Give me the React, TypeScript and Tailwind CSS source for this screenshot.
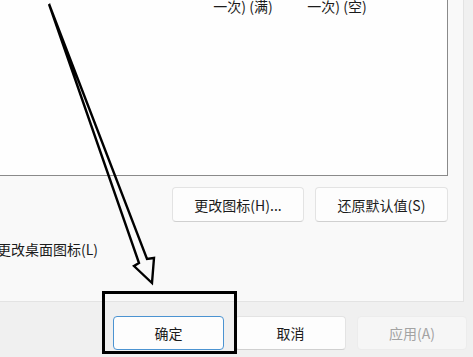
import React from "react";

const font = {
  fontFamily: '"Noto Sans CJK SC", "Noto Sans", sans-serif',
};

function DialogButton({
  label,
  width,
  primary,
  disabled,
}: {
  label: string;
  width: string;
  primary?: boolean;
  disabled?: boolean;
}) {
  let tone = "border-[#e3e3e3] border-b-[#d0d0d0] bg-[#fdfdfd] text-[#1b1b1b]";
  if (primary) tone = "border-[#4b93d1] bg-[#fdfdfd] text-[#1b1b1b]";
  if (disabled) tone = "border-[#ececec] bg-[#f6f6f6] text-[#a3a3a3]";
  return (
    <button
      className={`${width} h-[34px] shrink-0 rounded-[4px] border text-[14px] leading-[20px] ${tone}`}
    >
      {label}
    </button>
  );
}

function Annotation() {
  return (
    <svg
      className="absolute left-0 top-0 pointer-events-none"
      width={473}
      height={357}
      viewBox="0 0 473 357"
    >
      <polygon
        points="49,4 139,263 134,266 152,283 154,258 147,259"
        fill="none"
        stroke="#000"
        strokeWidth={2.4}
        strokeLinejoin="miter"
      />
    </svg>
  );
}

export default function App() {
  return (
    <div
      className="relative w-[473px] h-[357px] overflow-hidden bg-[#f0f0f0]"
      style={font}
    >
      <div className="w-[464px] h-[302px] bg-[#f9f9f9] border-r border-b border-[#e3e3e3] flex flex-col">
        <div className="w-[448px] h-[176px] bg-[#fefefe] border-r border-b border-[#8a8a8a] flex">
          <div className="ml-[196px] flex -mt-[4px] h-[20px] text-[14px] leading-[20px] text-[#1b1b1b]">
            <div className="w-[94px] text-center">一次) (满)</div>
            <div className="w-[94px] text-center">一次) (空)</div>
          </div>
        </div>

        <div className="mt-[11px] pr-[15px] flex justify-end gap-[11px]">
          <DialogButton label="更改图标(H)..." width="w-[132px] h-[35px]" />
          <DialogButton label="还原默认值(S)" width="w-[133px] h-[35px]" />
        </div>

        <div className="mt-[17px] -ml-[3px] text-[14px] leading-[20px] text-[#1b1b1b]">
          更改桌面图标(L)
        </div>
      </div>

      <div className="mt-[14px] pl-[113px] flex gap-[11px]">
        <DialogButton label="确定" width="w-[111px]" primary />
        <DialogButton label="取消" width="w-[111px]" />
        <DialogButton label="应用(A)" width="w-[110px]" disabled />
      </div>

      <div className="absolute left-[102px] top-[291px] w-[135px] h-[63px] border-[3px] border-black" />
      <Annotation />
    </div>
  );
}
